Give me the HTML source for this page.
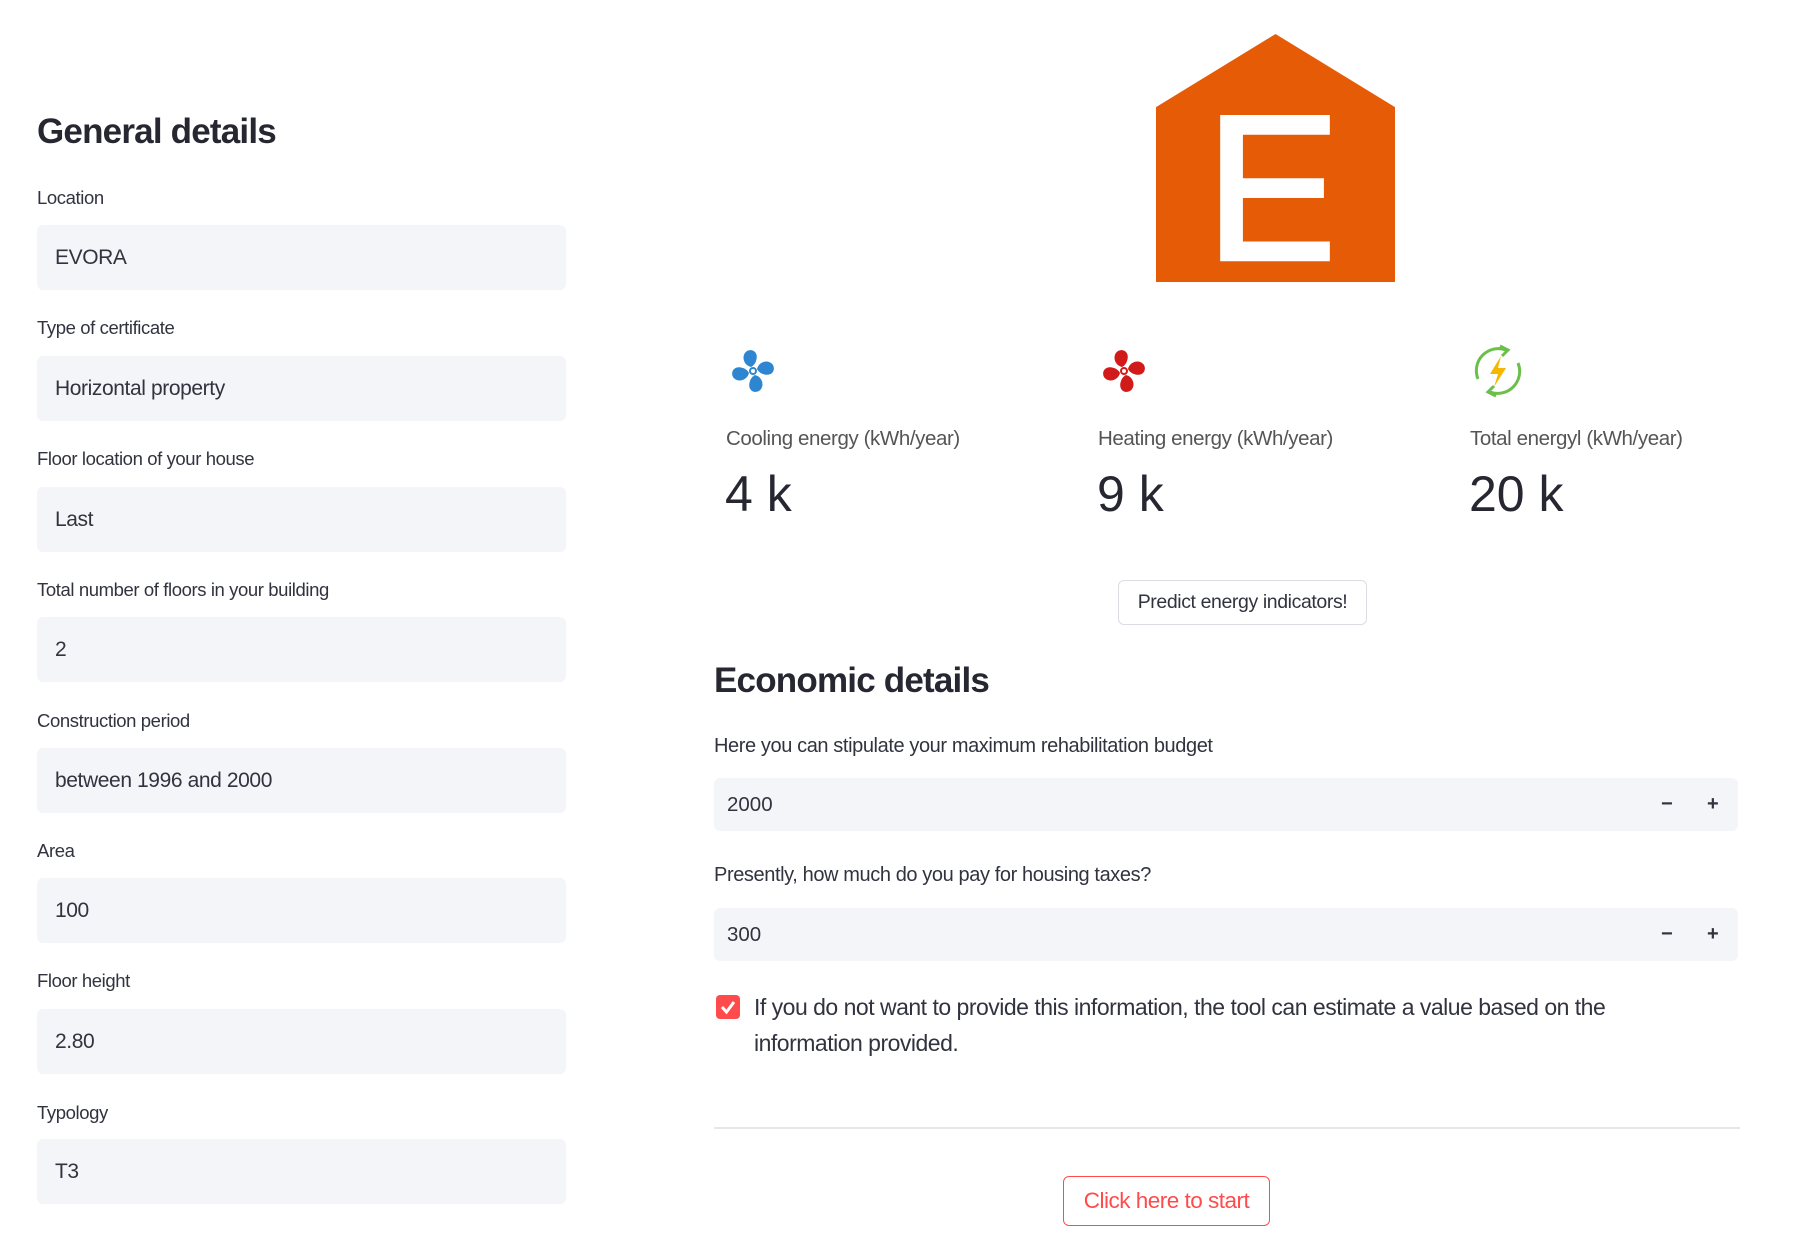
<!DOCTYPE html>
<html><head><meta charset="utf-8"><style>
*{margin:0;padding:0;box-sizing:border-box}
body{width:1794px;height:1250px;background:#fff;position:relative;overflow:hidden;font-family:"Liberation Sans",sans-serif;color:#31333f}
.a{position:absolute;white-space:nowrap}
.lbl{font-size:18.5px;color:#31333f;letter-spacing:-0.4px}
.inp{position:absolute;left:37px;width:529px;height:65px;background:#f4f5f8;border-radius:6px;font-size:21px;padding-left:18px;line-height:65px;letter-spacing:-0.4px}
.h{font-weight:bold;font-size:35px;letter-spacing:-0.8px;color:#262730}
.ml{font-size:20.5px;color:#555;letter-spacing:-0.4px}
.mv{font-size:50px;color:#262730}
.num{position:absolute;left:714px;width:1024px;height:53px;background:#f4f5f8;border-radius:6px;font-size:20.5px;line-height:53px;padding-left:13px}
.num b{position:absolute;font-weight:bold;font-size:20px}
</style></head><body>
<div class="a h" style="left:37px;top:112px">General details</div>

<div class="a lbl" style="left:37px;top:187px">Location</div>
<div class="inp" style="top:225px">EVORA</div>
<div class="a lbl" style="left:37px;top:317px">Type of certificate</div>
<div class="inp" style="top:356px">Horizontal property</div>
<div class="a lbl" style="left:37px;top:448px">Floor location of your house</div>
<div class="inp" style="top:487px">Last</div>
<div class="a lbl" style="left:37px;top:579px">Total number of floors in your building</div>
<div class="inp" style="top:617px">2</div>
<div class="a lbl" style="left:37px;top:710px">Construction period</div>
<div class="inp" style="top:748px">between 1996 and 2000</div>
<div class="a lbl" style="left:37px;top:840px">Area</div>
<div class="inp" style="top:878px">100</div>
<div class="a lbl" style="left:37px;top:970px">Floor height</div>
<div class="inp" style="top:1009px">2.80</div>
<div class="a lbl" style="left:37px;top:1102px">Typology</div>
<div class="inp" style="top:1139px">T3</div>

<svg class="a" style="left:1156px;top:34px" width="239" height="248" viewBox="0 0 242 251">
<polygon points="121,0 242,74 242,251 0,251 0,74" fill="#e65c06"/>
<path d="M65 82 H176 V102 H88 V146 H170 V166 H88 V210 H176 V230 H65 Z" fill="#fff"/>
</svg>

<svg class="a" style="left:728px;top:348px" width="50" height="46" viewBox="-25 -23 50 46">
<g fill="#2f86d0"><circle r="3" fill="none" stroke="#2f86d0" stroke-width="2"/>
<g id="bl"><path d="M-2,-4 C-10,-6 -12,-16 -6,-20 C0,-23 6,-18 3,-10 C2,-7 0,-5 -2,-4Z"/></g>
<use href="#bl" transform="rotate(90)"/><use href="#bl" transform="rotate(180)"/><use href="#bl" transform="rotate(270)"/></g></svg>
<svg class="a" style="left:1099px;top:348px" width="50" height="46" viewBox="-25 -23 50 46">
<g fill="#d11a1a"><circle r="3" fill="none" stroke="#d11a1a" stroke-width="2"/>
<g id="bl2"><path d="M-2,-4 C-10,-6 -12,-16 -6,-20 C0,-23 6,-18 3,-10 C2,-7 0,-5 -2,-4Z"/></g>
<use href="#bl2" transform="rotate(90)"/><use href="#bl2" transform="rotate(180)"/><use href="#bl2" transform="rotate(270)"/></g></svg>
<svg class="a" style="left:1470px;top:343px" width="56" height="56" viewBox="0 0 56 56">
<path d="M8 36 A22 22 0 0 1 36 7" fill="none" stroke="#6cbf4b" stroke-width="3"/>
<path d="M48 20 A22 22 0 0 1 20 49" fill="none" stroke="#6cbf4b" stroke-width="3"/>
<path d="M30 3 L38 7 L32 13" fill="none" stroke="#6cbf4b" stroke-width="3"/>
<path d="M26 53 L18 49 L24 43" fill="none" stroke="#6cbf4b" stroke-width="3"/>
<path d="M31 13 L20 31 H28 L24 44 L36 25 H28 Z" fill="#f5b800"/>
</svg>

<div class="a ml" style="left:726px;top:427px">Cooling energy (kWh/year)</div>
<div class="a ml" style="left:1098px;top:427px">Heating energy (kWh/year)</div>
<div class="a ml" style="left:1470px;top:427px">Total energyl (kWh/year)</div>
<div class="a mv" style="left:725px;top:465px">4 k</div>
<div class="a mv" style="left:1097px;top:465px">9 k</div>
<div class="a mv" style="left:1469px;top:465px">20 k</div>

<div class="a" style="left:1118px;top:580px;width:249px;height:45px;border:1px solid #dcdde2;border-radius:6px;font-size:19.5px;line-height:43px;text-align:center;letter-spacing:-0.4px">Predict energy indicators!</div>

<div class="a h" style="left:714px;top:661px">Economic details</div>
<div class="a lbl" style="left:714px;top:735px;font-size:20px">Here you can stipulate your maximum rehabilitation budget</div>
<div class="num" style="top:778px">2000<b style="left:947px">−</b><b style="left:993px">+</b></div>
<div class="a lbl" style="left:714px;top:864px;font-size:20px">Presently, how much do you pay for housing taxes?</div>
<div class="num" style="top:908px">300<b style="left:947px">−</b><b style="left:993px">+</b></div>

<div class="a" style="left:716px;top:995px;width:24px;height:24px;background:#ff4b4b;border-radius:4px"></div>
<svg class="a" style="left:716px;top:995px" width="24" height="24"><path d="M6 12 L10.5 17 L18 7" fill="none" stroke="#fff" stroke-width="3"/></svg>
<div class="a" style="left:754px;top:989px;font-size:23px;line-height:36px;letter-spacing:-0.5px;white-space:normal;width:880px">If you do not want to provide this information, the tool can estimate a value based on the information provided.</div>

<div class="a" style="left:714px;top:1127px;width:1026px;height:2px;background:#e6e7ea"></div>

<div class="a" style="left:1063px;top:1176px;width:207px;height:50px;border:1.5px solid #ff4b4b;border-radius:6px;color:#ff4b4b;font-size:22.5px;line-height:47px;text-align:center;letter-spacing:-0.5px">Click here to start</div>
</body></html>
